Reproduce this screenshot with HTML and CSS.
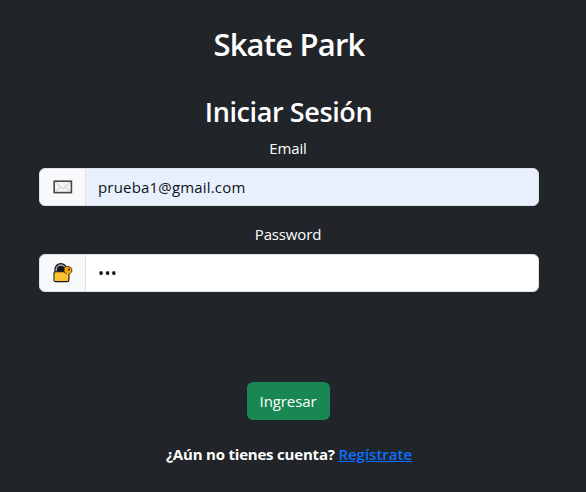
FILE: index.html
```html
<!DOCTYPE html>
<html lang="es">
<head>
<meta charset="utf-8">
<title>Skate Park</title>
<link rel="stylesheet" href="styles.css">
</head>
<body>
<main class="page">
  <h1 class="title">Skate Park</h1>
  <h2 class="subtitle">Iniciar Sesión</h2>
  <form class="login">
    <label class="label" for="email">Email</label>
    <div class="group">
      <span class="addon">
        <svg width="20" height="14" viewBox="0 0 20 14">
          <rect x="1.2" y="1.2" width="17.2" height="11.4" fill="#f3f3f3" stroke="#47484a" stroke-width="1.6"/>
          <path d="M2.5 11.5 7.6 7M17 11.5 12 7M2.5 2.4 9.8 8.8 17 2.4" fill="none" stroke="#c9c9c9" stroke-width="1"/>
        </svg>
      </span>
      <input class="control filled" id="email" type="text" value="prueba1@gmail.com">
    </div>
    <label class="label label-password" for="password">Password</label>
    <div class="group">
      <span class="addon">
        <svg width="20" height="20" viewBox="0 0 20 20">
          <path d="M2.6 10V6.4a5.2 5.2 0 0 1 10.4 0V10z" fill="#15171b" stroke="#15171b" stroke-width="2.4"/>
          <path d="M3.2 9.5V6.6a4.6 4.6 0 0 1 9.2 0" fill="none" stroke="#b5babf" stroke-width="1.3"/>
          <rect x="1" y="8.8" width="14.8" height="9.8" rx="1.4" fill="#fdc22f" stroke="#15171b" stroke-width="1.1"/>
          <path d="M12.2 3.6h4.3l2.3 2v3.2l-2.2 2.1-.8.2v5.6h-2.2v-5.4l-2.5-2.1V5.2z" fill="#f5a30a" stroke="#33240c" stroke-width=".8"/>
          <path d="M1.8 11.2h13.2v6.5H1.8z" fill="#fdc22f"/>
          <circle cx="16" cy="6.4" r="1" fill="#28200f"/>
        </svg>
      </span>
      <input class="control password" id="password" type="text" value="•••">
    </div>
    <button class="submit" type="button">Ingresar</button>
  </form>
  <p class="signup">¿Aún no tienes cuenta? <a class="link" href="#">Regístrate</a></p>
</main>
</body>
</html>
```
FILE: styles.css
```css
* { box-sizing: border-box; }
body {
  margin: 0;
  background: #212529;
  color: #fff;
  font: 400 16px/24px "Open Sans", "Noto Sans", sans-serif;
}
.page {
  width: 500px;
  margin-left: 39px;
  padding-top: 25px;
  text-align: center;
}
.title {
  margin: 0;
  font-size: 31px;
  line-height: 38px;
  font-weight: 600;
  letter-spacing: -0.8px;
}
.subtitle {
  margin: 32px 0 0;
  padding-right: 1px;
  font-size: 27px;
  line-height: 34px;
  font-weight: 600;
  letter-spacing: -0.4px;
}
.login {
  display: flex;
  flex-direction: column;
  align-items: center;
  margin-top: 7px;
}
.label {
  margin-bottom: 8px;
  padding-right: 2px;
  font-size: 15px;
  letter-spacing: -0.15px;
}
.label-password { margin-top: 16px; }
.group { display: flex; width: 100%; height: 38px; }
.addon {
  display: flex;
  align-items: center;
  justify-content: center;
  width: 47px;
  border: 1px solid #dee2e6;
  border-radius: 6px 0 0 6px;
  background: #f8f9fa;
}
.control {
  flex: 1;
  min-width: 0;
  margin: 0 0 0 -1px;
  padding: 0 13px 0 12px;
  border: 1px solid #dee2e6;
  border-radius: 0 6px 6px 0;
  background: #fff;
  color: #111417;
  font: inherit;
  font-size: 15px;
  letter-spacing: 0.18px;
  outline: 0;
}
.filled { background: #e8f0fe; }
.password { font-size: 16px; letter-spacing: 0.4px; }
.submit {
  width: 83px;
  height: 38px;
  margin: 90px 2px 0 0;
  padding: 0;
  border: 0;
  border-radius: 6px;
  background: #198754;
  color: #fff;
  font: inherit;
  font-size: 15px;
  letter-spacing: -0.1px;
}
.signup {
  margin: 22px 0 0;
  font-size: 15px;
  font-weight: 700;
  letter-spacing: -0.2px;
  white-space: nowrap;
}
.link { color: #0d6efd; font-weight: 600; letter-spacing: 0; }
```
